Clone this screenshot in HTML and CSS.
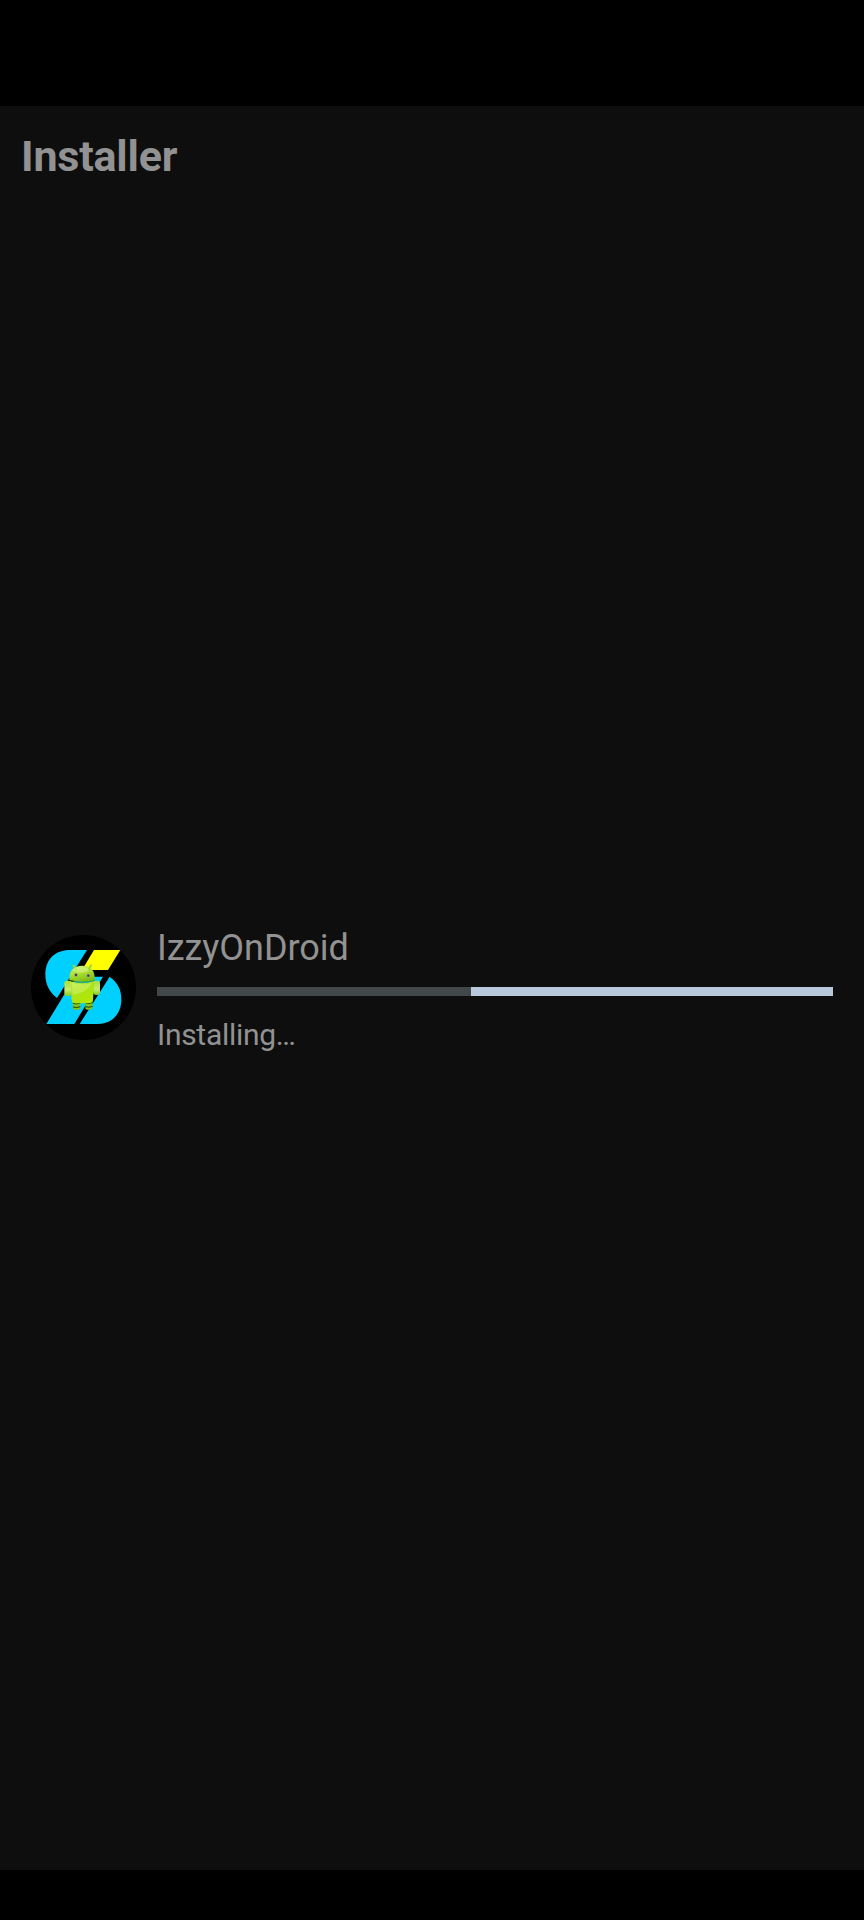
FILE: index.html
```
<!DOCTYPE html>
<html lang="en">
<head>
<meta charset="utf-8">
<title>Installer</title>
<link rel="stylesheet" href="styles.css">
</head>
<body>
<main class="screen">
  <h1 class="title">Installer</h1>
  <section class="install">
    <svg class="app-icon" viewBox="33 45 315 315" aria-hidden="true">
      <defs>
        <linearGradient id="head" x1="0" y1="0" x2="0.4" y2="1">
          <stop offset="0" stop-color="#c9ef6a"/>
          <stop offset="0.5" stop-color="#b0e335"/>
          <stop offset="1" stop-color="#80c014"/>
        </linearGradient>
        <linearGradient id="body" x1="0" y1="0" x2="0.6" y2="1">
          <stop offset="0" stop-color="#c1ed50"/>
          <stop offset="0.5" stop-color="#a9e414"/>
          <stop offset="1" stop-color="#b5e707"/>
        </linearGradient>
        <linearGradient id="arm" x1="0" y1="0" x2="0" y2="1">
          <stop offset="0" stop-color="#a8dd38"/>
          <stop offset="0.6" stop-color="#c5ec72"/>
          <stop offset="1" stop-color="#86c91b"/>
        </linearGradient>
      </defs>
      <circle cx="190.500" cy="202.500" r="157.500" fill="#000"/>
      <path d="M201 90H151C105 90 76 118 76 163C76 193 88 217 111 234Z" fill="#00d0ff"/>
      <path d="M222 90H301L264 150H186Z" fill="#ff0"/>
      <path d="M130 228L172 170H249L163 312H79Z" fill="#00d0ff"/>
      <path d="M269 170C292 187 304 208 304 238C304 283 275 312 232 312H179Z" fill="#00d0ff"/>
      <path d="M159 240H181V266Q170 274 159 267ZM196 240H218V265Q207 273 196 267Z" fill="#7fc51a"/>
      <path d="M159 250Q170 254 181 249M159 261Q170 265 181 260M196 249Q207 253 218 248M196 260Q207 264 218 259" fill="none" stroke="#244c08" stroke-width="3"/>
      <rect x="133" y="182" width="22" height="46" rx="8" fill="url(#arm)"/>
      <rect x="220" y="182" width="20" height="43" rx="8" fill="url(#arm)"/>
      <path d="M151 184Q188 196 223 183L219 240Q216 250 205 250H165Q156 249 155 240Z" fill="url(#body)"/>
      <path d="M156 188Q190 198 216 188Q207 214 158 225Z" fill="#ddf589" opacity=".45"/>
      <path d="M148 180C147 152 160 137 187 137C213 137 226 152 224 180Q188 191 148 180Z" fill="url(#head)"/>
      <path d="M168 149L161 137M206 149L213 136" stroke="#9bdc2c" stroke-width="6" stroke-linecap="round"/>
      <path d="M150 182Q188 192 224 181" fill="none" stroke="#4d8805" stroke-width="2.500"/>
      <ellipse cx="183" cy="149" rx="23" ry="9" fill="#e4f7a6" opacity=".45"/>
      <circle cx="168" cy="165" r="6.500" fill="#a4ad78"/>
      <circle cx="205" cy="167" r="6.500" fill="#a4ad78"/>
      <circle cx="168" cy="165" r="3.500" fill="#34421d"/>
      <circle cx="205" cy="167" r="3.500" fill="#34421d"/>
    </svg>
    <div class="details">
      <h2 class="app-name">IzzyOnDroid</h2>
      <div class="progress"><div class="progress-segment"></div></div>
      <p class="status">Installing…</p>
    </div>
  </section>
</main>
</body>
</html>
```
FILE: styles.css
```
* {
  box-sizing: border-box;
}

body {
  margin: 0;
  background: #000;
  color: #929292;
  font-family: Roboto, "Liberation Sans", sans-serif;
}

.screen {
  height: 1764px;
  margin: 106px 0 50px;
  padding-top: 25px;
  background: #0e0e0e;
}

.title {
  margin: 0;
  padding-left: 21px;
  font-size: 43px;
  font-weight: 700;
  letter-spacing: -0.2px;
  line-height: 50px;
}

.install {
  display: flex;
  align-items: flex-start;
  gap: 21px;
  margin-top: 746px;
  padding: 0 31px;
}

.app-icon {
  flex: none;
  width: 105px;
  height: 105px;
  margin-top: 8px;
}

.details {
  flex: 1;
}

.app-name {
  margin: 0;
  font-size: 36px;
  font-weight: 400;
  letter-spacing: -0.05px;
  line-height: 42px;
}

.progress {
  display: flex;
  justify-content: flex-end;
  height: 9px;
  margin-top: 18px;
  background: #42474a;
}

.progress-segment {
  width: 362px;
  background: #b8c9dc;
}

.status {
  margin: 21px 0 0;
  font-size: 30px;
  letter-spacing: -0.28px;
  line-height: 36px;
}
```
